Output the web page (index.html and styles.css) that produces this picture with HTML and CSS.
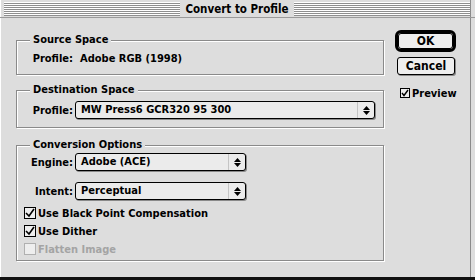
FILE: index.html
```html
<!DOCTYPE html>
<html>
    <head>
        <link rel="stylesheet" href="styles.css">
    </head>
    <body>
        <div class="dialog">
            <div class="titlebar"><span class="title">Convert to Profile</span></div>
            <div class="content">
                <div class="left">
                    <div class="group source">
                        <div class="group-title">Source Space</div>
                        <div class="field">
                            <span class="label">Profile:</span>
                            <span class="value">Adobe RGB (1998)</span>
                        </div>
                    </div>

                    <div class="group dest">
                        <div class="group-title">Destination Space</div>
                        <div class="field">
                            <span class="label">Profile:</span>
                            <div class="popup wide">
                                <span class="popup-text">MW Press6 GCR320 95 300</span>
                                <span class="popup-arrow">
                                    <svg width="7" height="9" viewBox="0 0 7 9"><path d="M3.5 0 L7 4 L0 4 Z M0 5 L7 5 L3.5 9 Z" fill="#000"/></svg>
                                </span>
                            </div>
                        </div>
                    </div>

                    <div class="group options">
                        <div class="group-title">Conversion Options</div>
                        <div class="field engine">
                            <span class="label">Engine:</span>
                            <div class="popup">
                                <span class="popup-text">Adobe (ACE)</span>
                                <span class="popup-arrow">
                                    <svg width="7" height="9" viewBox="0 0 7 9"><path d="M3.5 0 L7 4 L0 4 Z M0 5 L7 5 L3.5 9 Z" fill="#000"/></svg>
                                </span>
                            </div>
                        </div>
                        <div class="field intent">
                            <span class="label">Intent:</span>
                            <div class="popup">
                                <span class="popup-text">Perceptual</span>
                                <span class="popup-arrow">
                                    <svg width="7" height="9" viewBox="0 0 7 9"><path d="M3.5 0 L7 4 L0 4 Z M0 5 L7 5 L3.5 9 Z" fill="#000"/></svg>
                                </span>
                            </div>
                        </div>
                        <div class="checks">
                            <div class="check">
                                <span class="box"><svg width="10" height="10" viewBox="0 0 10 10"><path d="M1 5 L4 8 L9 1" stroke="#000" stroke-width="1.6" fill="none"/></svg></span>
                                Use Black Point Compensation
                            </div>
                            <div class="check">
                                <span class="box"><svg width="10" height="10" viewBox="0 0 10 10"><path d="M1 5 L4 8 L9 1" stroke="#000" stroke-width="1.6" fill="none"/></svg></span>
                                Use Dither
                            </div>
                            <div class="check disabled">
                                <span class="box"></span>
                                Flatten Image
                            </div>
                        </div>
                    </div>
                </div>

                <div class="right">
                    <div class="default-ring"><div class="btn">OK</div></div>
                    <div class="btn cancel">Cancel</div>
                    <div class="check preview">
                        <span class="box small"><svg width="8" height="8" viewBox="0 0 8 8"><path d="M1 4 L3 6.5 L7 1" stroke="#000" stroke-width="1.4" fill="none"/></svg></span>
                        Preview
                    </div>
                </div>
            </div>
        </div>
    </body>
</html>
```

FILE: styles.css
```css
body {
    margin: 0;
    background: #dddddd;
    font-family: "DejaVu Sans Condensed", "DejaVu Sans", sans-serif;
    font-size: 11px;
    font-weight: bold;
    color: #000;
}

.dialog {
    width: 475px;
    height: 280px;
    box-sizing: border-box;
    background: #dddddd;
    border-bottom: 3px solid #111;
    box-shadow: inset -4px 0 0 #dddddd, inset -5px 0 0 #8a8a8a, inset 1px 0 0 #fff;
    display: flex;
    flex-direction: column;
}

.titlebar {
    height: 18px;
    box-sizing: border-box;
    padding: 2px 5px 1px 4px;
    border-bottom: 1px solid #9a9a9a;
    background: repeating-linear-gradient(to bottom, #ffffff 0 1px, #8e8e8e 1px 2px) content-box;
    display: flex;
    justify-content: center;
    align-items: center;
}

.title {
    background: #dddddd;
    padding: 0 5px;
    line-height: 14px;
    font-size: 11.5px;
}

.content {
    display: flex;
}

.left {
    width: 368px;
    padding: 22px 0 0 16px;
}

.group {
    box-sizing: border-box;
    border: 1px solid #8a8a8a;
    box-shadow: inset 1px 1px 0 #fff, 1px 1px 0 #fff;
}

.group-title {
    width: fit-content;
    margin: -8px 0 0 13px;
    padding: 0 3px;
    line-height: 14px;
    background: #dddddd;
}

.source {
    height: 35px;
}

.source .field {
    margin-top: 5px;
    line-height: 14px;
}

.dest {
    margin-top: 15px;
    height: 38px;
}

.dest .field {
    margin-top: 4px;
}

.options {
    margin-top: 17px;
    height: 116px;
}

.field {
    display: flex;
    align-items: center;
}

.label {
    width: 56px;
    text-align: right;
    margin-right: 2px;
}

.value {
    margin-left: 5px;
}

.popup {
    display: flex;
    width: 171px;
    height: 18px;
    box-sizing: border-box;
    border: 1px solid #000;
    border-radius: 3px;
    background: #ebebeb;
    box-shadow: 1px 1px 0 #8a8a8a;
}

.popup.wide {
    width: 300px;
}

.popup-text {
    flex: 1;
    padding-left: 5px;
    line-height: 16px;
}

.popup-arrow {
    width: 16px;
    border-left: 1px solid #c4c4c4;
    display: flex;
    align-items: center;
    justify-content: center;
}

.engine {
    margin-top: 1px;
}

.intent {
    margin-top: 11px;
}

.checks {
    margin-top: 4px;
}

.check {
    display: flex;
    align-items: center;
    height: 18px;
    padding-left: 7px;
}

.box {
    width: 12px;
    height: 12px;
    box-sizing: border-box;
    border: 1px solid #000;
    background: #eeeeee;
    margin-right: 2px;
    display: flex;
    align-items: center;
    justify-content: center;
}

.check.disabled {
    color: #a4a4a4;
}

.check.disabled .box {
    border-color: #b0b0b0;
}

.right {
    padding: 12px 0 0 11px;
    display: flex;
    flex-direction: column;
}

.default-ring {
    width: 61px;
    height: 22px;
    box-sizing: border-box;
    border: 3px solid #000;
    border-radius: 6px;
    background: #bdbdbd;
    display: flex;
}

.btn {
    flex: 1;
    display: flex;
    align-items: center;
    justify-content: center;
    border: 1px solid #000;
    border-radius: 3px;
    background: #eeeeee;
    font-size: 12px;
}

.btn.cancel {
    flex: none;
    width: 58px;
    height: 18px;
    box-sizing: border-box;
    margin: 5px 0 0 2px;
    box-shadow: 1px 1px 0 #8a8a8a;
}

.check.preview {
    margin-top: 12px;
    padding-left: 5px;
    height: 12px;
}

.box.small {
    width: 10px;
    height: 10px;
}
```
